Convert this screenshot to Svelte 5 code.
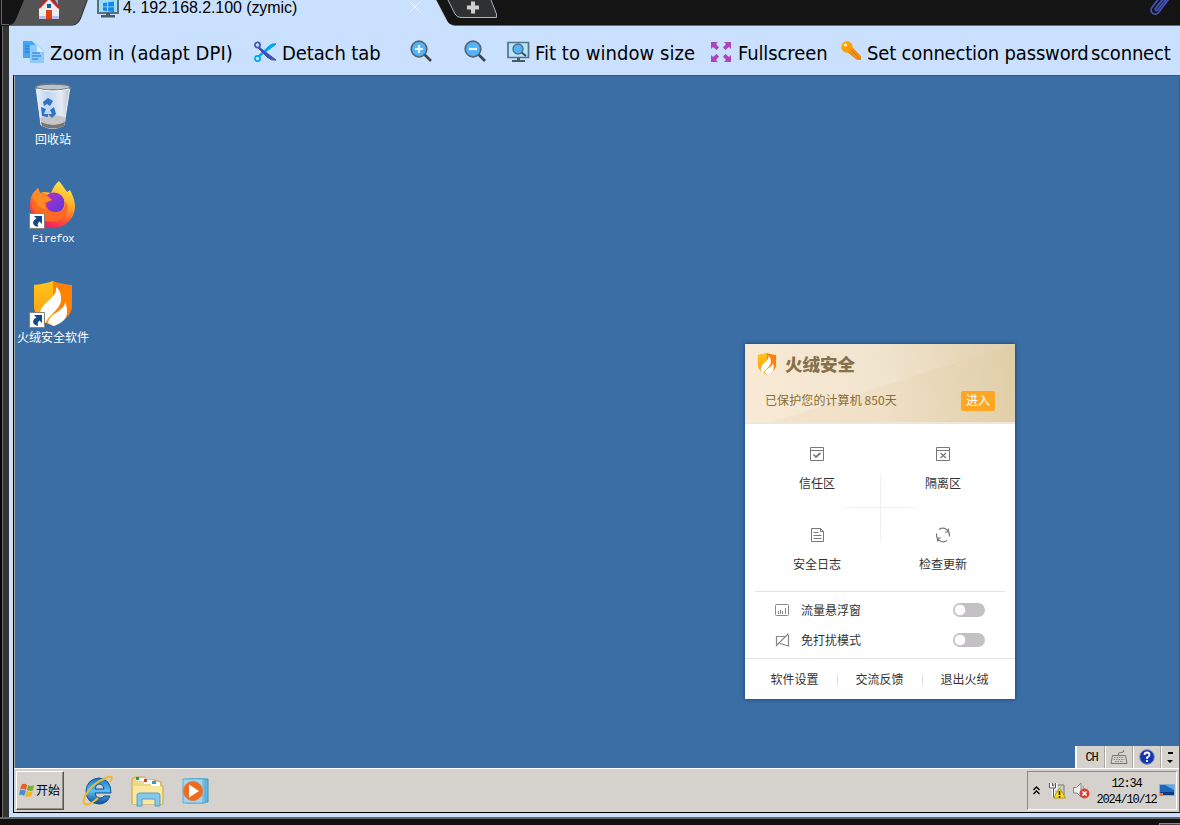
<script>
  const tiles = [
    { label: '信任区', icon: 'trust' },
    { label: '隔离区', icon: 'isolate' },
    { label: '安全日志', icon: 'log' },
    { label: '检查更新', icon: 'update' }
  ];
  const links = ['软件设置', '交流反馈', '退出火绒'];
</script>

{#snippet flame(w, h)}
  <svg width={w} height={h} viewBox="0 0 40 46">
    <defs>
      <linearGradient id="shieldL" x1="0" y1="0" x2="0" y2="1"><stop offset="0" stop-color="#ffc51c" /><stop offset="1" stop-color="#ff9a0c" /></linearGradient>
    </defs>
    <path d="M1 4Q12 3 20 0Q28 3 39 4V25Q39 37 20 45Q1 37 1 25Z" fill="#ff8206" />
    <path d="M1 4Q12 3 20 0V45Q1 37 1 25Z" fill="url(#shieldL)" />
    <path d="M23 6C25 17 7 22 7 33C7 38 10 40 13 42C14 34 29 29 28 17C28 12 26 8 23 6ZM32 20C33 30 17 31 15 42L21 45C29 42 34 38 34 31C34 26 33 23 32 20Z" fill="#fff" />
  </svg>
{/snippet}

{#snippet shortcut()}
  <svg class="shortcut" width="16" height="16" viewBox="0 0 16 16">
    <path d="M.5.5h15v15H.5z" fill="#fff" stroke="#85817a" />
    <path d="M5 3h8v8l-2.500-2.500Q8 10 9 14Q4 12.500 4 9.500Q4.500 6.500 7.500 5.500Z" fill="#164787" />
  </svg>
{/snippet}

{#snippet lens(plus)}
  <svg width="23" height="23" viewBox="0 0 23 23">
    <path d="M14 14l7 7" stroke="#37474f" stroke-width="2.6" />
    <circle cx="9" cy="9" r="7.8" fill="#55b3fa" stroke="#546572" stroke-width="1.7" />
    <path d={plus ? 'M5 9h8M9 5v8' : 'M5 9h8'} stroke="#e8f5ff" stroke-width="2.2" />
  </svg>
{/snippet}

<div class="app">
  <header class="tabs">
    <svg class="strip" width="1180" height="26" viewBox="0 0 1180 26">
      <path d="M0 0h1180v26H0z" fill="#141414" />
      <path d="M1.500 0v24.500H9" fill="none" stroke="#666" />
      <path d="M10 25Q14 24 16 19L24 0H87L80 19Q77 25 72 25Z" fill="#545454" />
      <path d="M9 25.500H75Q79 24 81 19L88 0H436L447 21Q449 25.500 455 25.500H1180" fill="#cae0ff" stroke="#666966" />
      <path d="M72 26Q78 25 81 19L88 0H436L447 21Q449 25 455 26Z" fill="#cae0ff" />
      <path d="M448 0L455 14Q457 17.500 461 17.500H496.500V14L491 0" fill="#303030" stroke="#a3b5c8" />
      <path d="M467 7.500h12M473 1.500v12" stroke="#d0d0d0" stroke-width="4" />
      <path d="M410 2l10 10M420 2l-10 10" stroke="#f4f8ff" stroke-width="1" />
      <path d="M39 8L49-2L59 8V19H39Z" fill="#ececec" /><path d="M39 16h7v3h-7zM52 16h7v3h-7z" fill="#b8bdec" />
      <path d="M55 0h3v5z" fill="#9fa8da" />
      <path d="M39 8L49-2.500L59 8" fill="none" stroke="#d71920" stroke-width="2" />
      <path d="M46 10h6v9h-6z" fill="#df4417" /><path d="M47 4h4v4h-4z" fill="#075fa8" />
      <path d="M98-2h20v15H98z" fill="#9edcf7" stroke="#53717f" stroke-width="2" />
      <path d="M103 3l4-.6v4h-4zM108 2.200l6-.8v5h-6zM103 7.300h4v4l-4-.7zM108 7.300h6v4.700l-6-.8z" fill="#1688e8" />
      <path d="M106 13h4v2h5v2.500h-14V15h5z" fill="#475e68" />
      <path d="M1160-3L1152 7.500a4 4 0 0 0 6.500 5L1171-4M1163-1L1155.500 8.500a1 1 0 0 0 2 1.500L1167-2" fill="none" stroke="#3f51b5" stroke-width="1.900" />
    </svg>
    <span class="tab-title">4. 192.168.2.100 (zymic)</span>
  </header>

  <div class="session">
    <aside class="edge"></aside>
    <main class="client">
      <nav class="toolbar">
        <div class="tool zoomin">
          <svg width="21" height="22" viewBox="0 0 21 22"><path d="M0 0h9l5 5v12H0z" fill="#42a5f5" /><path d="M2 5h4M2 8h4M2 11h4" stroke="#1976d2" /><path d="M7 4h8l6 6v12H7z" fill="#90caf9" /><path d="M14 4v7h7z" fill="#d9efff" /><path d="M9 12h8M9 15h9M9 18h6" stroke="#1976d2" /></svg>
          <span>Zoom in (adapt DPI)</span>
        </div>
        <div class="tool detach">
          <svg width="23" height="22" viewBox="0 0 23 22"><path d="M5 16L22 3Q18 2 14 6L4 15" fill="#00a8ef" stroke="#00a8ef" /><path d="M5 6L22 19Q17 20 13 16L4 7" fill="#3f51b5" stroke="#3f51b5" /><path d="M11 11L22 3Q18 2 14 6z" fill="#00a8ef" stroke="#00a8ef" /><circle cx="3.500" cy="4" r="2.600" fill="none" stroke="#4658b6" stroke-width="1.800" /><circle cx="3.500" cy="17.500" r="2.600" fill="none" stroke="#00a8ef" stroke-width="1.800" /></svg>
          <span>Detach tab</span>
        </div>
        <div class="tool plus">{@render lens(true)}</div>
        <div class="tool minus">{@render lens(false)}</div>
        <div class="tool fit">
          <svg width="23" height="22" viewBox="0 0 23 22"><path d="M1 1.500h20.500v15H1z" fill="#b7e4f8" stroke="#547487" stroke-width="1.700" /><path d="M10 17h3v2h5v2H5v-2h5z" fill="#455a64" /><path d="M14 11l5 4" stroke="#37474f" stroke-width="1.800" /><circle cx="11" cy="8" r="5" fill="#55b3fa" stroke="#527083" stroke-width="1.400" /></svg>
          <span>Fit to window size</span>
        </div>
        <div class="tool full">
          <svg width="20" height="20" viewBox="0 0 20 20" fill="#ad44bd"><path d="M0 0h7L5 2l3 3.500L5.500 8 2 5 0 7zM20 0v7l-2-2-3.500 3L12 5.500 15 2l-2-2zM0 20v-7l2 2 3.500-3L8 14.500 5 18l2 2zM20 20h-7l2-2-3-3.500 2.500-2.500 3.500 3 2-2z" /></svg>
          <span>Fullscreen</span>
        </div>
        <div class="tool key">
          <svg width="21" height="21" viewBox="0 0 21 21"><path d="M8 8l3-2 9 9v4h-4L6 11z" fill="#ef8d18" /><circle cx="6" cy="6" r="5.700" fill="#ffa000" /><path d="M9 8l10 10" stroke="#d87916" /><circle cx="4.500" cy="4" r="1.600" fill="#fff0cb" /></svg>
          <span>Set connection password</span>
        </div>
        <span class="disconnect">sconnect</span>
      </nav>

      <div class="remote">
        <section class="desktop">
          <div class="shortcut-item" style="top: 7px">
            <svg width="40" height="48" viewBox="0 0 40 48">
              <defs><linearGradient id="bin"><stop stop-color="#e8eff6" /><stop offset=".35" stop-color="#c0d6f2" /><stop offset=".75" stop-color="#e4eaf3" /><stop offset="1" stop-color="#b8c2cd" /></linearGradient></defs>
              <path d="M3 4L8 42Q20 49 31 42L37 4Z" fill="url(#bin)" stroke="#eef2f6" />
              <path d="M7 35Q20 29 33 35L31 43Q20 48 9 43Z" fill="#c5c5c5" /><path d="M8 39Q20 45 32 39L31 43Q20 48 9 43Z" fill="#777" />
              <ellipse cx="20" cy="4" rx="17" ry="3" fill="#b8c4d2" stroke="#6f767f" stroke-width="1.500" />
              <path d="M4 6Q20 10 36 6" fill="none" stroke="#fff" />
              <path d="M10 19l5-4 5 3-3 5-3-2-3 2zM8 24l5 2-2 5h4v3l-6-1zM17 27l4-3 2 7-4 4-4-4h4z" fill="#2f73c9" />
            </svg>
            <span>回收站</span>
          </div>
          <div class="shortcut-item" style="top: 105px">
            <svg width="48" height="48" viewBox="0 0 48 48">
              <defs>
                <linearGradient id="fx" x1=".8" y1="0" x2=".3" y2="1"><stop stop-color="#fff44f" /><stop offset=".35" stop-color="#ffb22c" /><stop offset=".68" stop-color="#ff5634" /><stop offset="1" stop-color="#ee116f" /></linearGradient>
                <linearGradient id="fp" x1="0" y1="0" x2="1" y2="1"><stop stop-color="#b530cc" /><stop offset="1" stop-color="#563ad8" /></linearGradient>
              </defs>
              <path d="M30 0Q34 5 38 11L41 9Q46 18 46 26A22 21 0 0 1 1 25Q1 17 4 12L9 7L11 12Q15 10 22 12Q25 4 30 0Z" fill="url(#fx)" />
              <circle cx="25" cy="22" r="10.500" fill="url(#fp)" />
              <path d="M11 12Q17 12 23 19L17 22Q17 31 27 31Q37 30 37 20Q42 35 28 40Q8 43 3 25Q5 17 11 12Z" fill="#ff6a22" />
              <path d="M9 7L11 12Q17 14 23 19L16 21Q15 26 18 29Q8 27 4 16Z" fill="#ff8b25" />
            </svg>
            {@render shortcut()}
            <span class="latin">Firefox</span>
          </div>
          <div class="shortcut-item shield" style="top: 205px">
            {@render flame(40, 46)}
            {@render shortcut()}
            <span>火绒安全软件</span>
          </div>

          <article class="popup">
            <div class="banner">
              <div class="brand">{@render flame(20, 22)}<strong>火绒安全</strong></div>
              <div class="status"><span>已保护您的计算机 850天</span><button>进入</button></div>
            </div>
            <div class="tiles">
              {#each tiles as t}
                <div class="tile">
                  <svg width="16" height="16" viewBox="0 0 16 16" fill="none" stroke="#777">
                    {#if t.icon === 'trust'}
                      <path d="M1.500 1.500h13v13h-13zM1.500 4.500h13" /><path d="M4.500 8.500l2.500 2.500L11.500 7" stroke-width="1.700" />
                    {:else if t.icon === 'isolate'}
                      <path d="M1.500 1.500h13v13h-13zM1.500 4.500h13" /><path d="M5.500 7l5.500 5M11 7l-5.500 5" stroke-width="1.300" />
                    {:else if t.icon === 'log'}
                      <path d="M2.500 1.500h9l3 3v10h-12zM11.500 1.500v3h3M4.500 5.500h5M4.500 8.500h8M4.500 11.500h8" />
                    {:else}
                      <path d="M4 2.500A6.600 6.600 0 0 1 14.200 9.500M12 13.500A6.600 6.600 0 0 1 1.800 6.500M13.500 1.500v3.500H10M2.500 14.500V11H6" stroke-width="1.200" />
                    {/if}
                  </svg>
                  <span>{t.label}</span>
                </div>
              {/each}
            </div>
            <div class="options">
              <div class="option">
                <svg width="16" height="16" viewBox="0 0 16 16" fill="none" stroke="#888"><rect x="1.500" y="2.500" width="13" height="11" rx="1" /><path d="M4.500 9v3M6.500 8v4M8.500 9v3M11.500 6v6" /></svg>
                <span>流量悬浮窗</span><i class="switch"></i>
              </div>
              <div class="option">
                <svg width="16" height="16" viewBox="0 0 16 16" fill="none" stroke="#888"><path d="M11 4.500H2.500v8M6 11.500l8.500 2.500V3M2 14L14.500 1.500" stroke-width="1.200" /></svg>
                <span>免打扰模式</span><i class="switch"></i>
              </div>
            </div>
            <footer class="links">{#each links as l}<span>{l}</span>{/each}</footer>
          </article>

          <div class="langbar">
            <span class="ch">CH</span>
            <span class="kb"><svg width="18" height="16" viewBox="0 0 18 16" fill="none" stroke="#777"><path d="M2.500 6.500h13l1.500 8H1zM8.500 6V4l5-1V1" /><path d="M4 8.500h10M3.500 10.500h11M5 12.500h8" stroke="#888" stroke-dasharray="1.500 1" /></svg></span>
            <span class="help"><svg width="16" height="16" viewBox="0 0 16 16"><circle cx="8" cy="8" r="7.300" fill="#1434b8" stroke="#7987a7" /><path d="M5.500 6Q5.500 3.500 8 3.500T10.500 6Q10.500 7.200 8 8.500V10M8 11v2" stroke="#fff" stroke-width="1.800" fill="none" /></svg></span>
            <span class="more"><svg width="7" height="13" viewBox="0 0 7 13"><path d="M1 1h5v2H1zM0 9h6l-3 3z" /></svg></span>
          </div>
        </section>

        <footer class="taskbar">
          <button class="start">
            <svg width="16" height="15" viewBox="0 0 16 15"><path d="M3 1Q6 0 8 2L7 7Q4 5 1 6Z" fill="#e65d28" /><path d="M9 2Q12 4 15 2L14 7Q11 9 8 7Z" fill="#79af34" /><path d="M1 7Q4 6 7 8L5 13Q3 11 0 12Z" fill="#438fd0" /><path d="M8 8Q11 10 14 8L12 13Q9 15 6 13Z" fill="#f3b719" /></svg>
            <span>开始</span>
          </button>
          <div class="pins">
            <svg width="32" height="32" viewBox="0 0 32 32">
              <defs><linearGradient id="ie" x1="0" y1="0" x2="0" y2="1"><stop stop-color="#1577c9" /><stop offset=".5" stop-color="#59c0ef" /><stop offset="1" stop-color="#0c4c9a" /></linearGradient></defs>
              <path fill-rule="evenodd" d="M17 3Q29 4 29 18H13Q14 23 18 23Q21 23 22 21H28Q25 29 17 29Q4 28 4 16Q5 4 17 3ZM13 14H22Q21 9 17 9Q14 9 13 14Z" fill="url(#ie)" stroke="#124f94" />
              <path d="M28 7Q33-1 24 3Q10 8 3 21Q-1 31 7 29Q12 27 16 23" fill="none" stroke="#efb72d" stroke-width="2" />
            </svg>
            <svg width="34" height="32" viewBox="0 0 34 32"><path d="M1 7V4l3-2h10v3h10l6 2v4h2v18H1z" fill="#efd783" stroke="#cfa849" /><path d="M5 3h9v3H5zM13 5h9v4h-9zM20 7h9v4h-9z" fill="#fff" /><path d="M5 2h3v3H5z" fill="#25a52c" /><path d="M13 4h3v3h-3z" fill="#dd3e20" /><path d="M21 6h4v3h-4z" fill="#289be0" /><path d="M2 11h29v18H2z" fill="#f9e9a0" /><path d="M6 31V20q0-2 3-2h17q3 0 3 2v11h-5v-7H11v7z" fill="#85c8e9" stroke="#559ec8" /></svg>
            <svg width="28" height="28" viewBox="0 0 28 28"><path d="M7 2h19v23H7z" fill="#64b5df" stroke="#3a94c4" /><path d="M4 2h19v24H4z" fill="#90cfee" stroke="#4ca3ce" /><path d="M1 2h20v24H1z" fill="#a1d5ee" stroke="#64abcf" /><circle cx="11" cy="14" r="9.500" fill="#f26b1d" stroke="#d97a43" /><path d="M7 7.500l10 6.500-10 6.500z" fill="#fff" /></svg>
          </div>
          <div class="tray">
            <svg class="chev" width="7" height="9" viewBox="0 0 7 9"><path d="M.5 4L3.500 1L6.500 4M.5 8L3.500 5L6.500 8" fill="none" stroke="#000" stroke-width="1.300" /></svg>
            <svg class="net" width="17" height="17" viewBox="0 0 17 17"><path d="M4 3h11v10H4z" fill="#ccc" stroke="#777" /><path d="M2 1v5h5V1M4.500 6v9" fill="none" stroke="#fff" stroke-width="3" /><path d="M.5 1v5h6V1M3.500 1v3M4.500 6v9" fill="none" stroke="#555" /><path d="M10.500 6l6 10h-12z" fill="#ffdf21" stroke="#b7960b" /><path d="M10.500 9v4M10.500 14v1.500" stroke="#111" stroke-width="1.500" /></svg>
            <svg class="vol" width="17" height="17" viewBox="0 0 17 17"><path d="M.5 5.500h3L8 1v14l-4-4H.5z" fill="#eee" stroke="#888" /><path d="M10 4q2 3 0 7" fill="none" stroke="#999" /><circle cx="11.500" cy="11.500" r="5" fill="#dc4033" /><path d="M9.500 9.500l4 4M13.500 9.500l-4 4" stroke="#fff" stroke-width="1.700" /></svg>
            <div class="clock"><span>12:34</span><span>2024/10/12</span></div>
            <svg class="show" width="16" height="13" viewBox="0 0 16 13"><path d="M.5.5h15v11H.5z" fill="#1b68bd" stroke="#8db1d6" /><path d="M6 1h9v5z" fill="#62a9e8" /><path d="M1 8h14v3H1z" fill="#123d78" /><path d="M1 9h3v3H1z" fill="#f37235" /></svg>
          </div>
        </footer>
      </div>
    </main>
  </div>
  <div class="bottom"><i></i></div>
</div>

<style>
  :global(body) { margin: 0; overflow: hidden; }
  .app { width: 1180px; height: 825px; display: flex; flex-direction: column; background: #141414; overflow: hidden; font-family: "Noto Sans CJK SC", sans-serif; font-size: 12px; }
  svg { display: block; flex: none; }
  button { font: inherit; padding: 0; }
  .tabs { height: 26px; position: relative; flex: none; }
  .strip { position: absolute; inset: 0; }
  .tab-title { position: absolute; left: 123px; top: 0; font: 16px/16px "Liberation Sans", sans-serif; letter-spacing: -.08px; white-space: nowrap; }
  .session { height: 791px; display: flex; flex: none; }
  .edge { width: 9px; box-sizing: border-box; border-left: 2px solid #050505; background: linear-gradient(90deg, #6a6a6a 1px, #333 1px); flex: none; }
  .client { width: 1171px; background: #cae0ff; display: flex; flex-direction: column; }
  .toolbar { height: 49px; box-sizing: border-box; padding-top: 2px; display: flex; align-items: center; font: 20px/26px "DejaVu Sans Condensed", "DejaVu Sans", sans-serif; font-stretch: condensed; white-space: nowrap; flex: none; color: #000; }
  .tool { display: flex; align-items: center; box-sizing: border-box; flex: none; }
  .tool span, .disconnect { padding-top: 2px; }
  .zoomin { width: 230px; padding-left: 14px; gap: 6px; letter-spacing: .08px; }
  .detach { width: 162px; padding-left: 15px; gap: 5px; letter-spacing: -.1px; }
  .plus { width: 54px; padding-left: 9px; }
  .minus { width: 43px; padding-left: 9px; }
  .fit { width: 204px; padding-left: 9px; gap: 5px; letter-spacing: .05px; }
  .full { width: 130px; padding-left: 9px; gap: 7px; letter-spacing: -.1px; }
  .key { width: 259px; padding-left: 9px; gap: 5px; letter-spacing: -.17px; }
  .disconnect { flex: none; letter-spacing: -.2px; }
  .remote { margin-left: 4px; width: 1167px; height: 738px; box-sizing: border-box; border: 1px solid #000; border-right-color: #555; border-top: 0; display: flex; flex-direction: column; }
  .desktop { height: 693px; position: relative; background: #3a6ea5; border-left: 1px solid #aaa69e; border-top: 1px solid #2f5b8a; box-sizing: border-box; flex: none; }
  .shortcut-item { position: absolute; left: 0; width: 76px; display: flex; flex-direction: column; align-items: center; color: #fff; }
  .shortcut-item > span { line-height: 16px; white-space: nowrap; }
  .shortcut-item .latin { font: 11px/14px "Liberation Mono", monospace; letter-spacing: -.6px; margin-top: 3px; }
  .shield > span { margin-top: 2px; }
  .shortcut { position: absolute; left: 14px; top: 32px; }
  .shield :global(.shortcut) { top: 31px; }
  .popup { position: absolute; left: 730px; top: 268px; width: 270px; height: 355px; background: #fff; box-shadow: 0 0 4px #173d69; color: #333; }
  .banner { height: 80px; box-sizing: border-box; padding: 9px 20px 0 12px; background: linear-gradient(162deg, transparent 52%, #dcc08d24 53%, #d6b7751c), linear-gradient(80deg, #f8ead5, #f2e5d0 48%, #e1d0ac); border-bottom: 2px solid #eee6d8; }
  .brand { display: flex; align-items: center; gap: 8px; height: 22px; color: #86714b; }
  .brand strong { font-size: 17.5px; line-height: 22px; font-weight: 900; }
  .status { display: flex; justify-content: space-between; align-items: center; height: 20px; margin: 16px 0 0 8px; color: #8a6d34; }
  .status span { margin-top: -3px; letter-spacing: .1px; }
  .status button { width: 34px; height: 20px; border: 0; border-radius: 2px; background: #ffa722; color: #fff; line-height: 18px; padding-bottom: 2px; }
  .tiles { height: 167px; box-sizing: border-box; padding: 22px 9px 0; display: grid; grid-template-columns: 126px 126px; grid-template-rows: 81px 81px; background: linear-gradient(transparent, #f3ecec 20%, #f3ecec 80%, transparent) 135px 45px / 1px 78px no-repeat, linear-gradient(90deg, transparent, #f3ecec 20%, #f3ecec 80%, transparent) 93px 83px / 84px 1px no-repeat; }
  .tile { display: flex; flex-direction: column; align-items: center; gap: 12px; }
  .tile span { line-height: 17px; }
  .options { height: 67px; margin: 0 10px; padding-top: 3px; border-top: 1px solid #e5e3e3; box-sizing: border-box; }
  .option { height: 30px; display: flex; align-items: center; padding: 0 20px 0 19px; }
  .option span { margin: -2px 0 0 11px; flex: 1; }
  .switch { width: 32px; height: 14px; border-radius: 7px; background: radial-gradient(circle at 7px 7px, #fff 5px, #c4c1c5 5.600px); }
  .links { height: 41px; border-top: 1px solid #e5e3e3; box-sizing: border-box; display: grid; grid-template-columns: repeat(3, 85px); padding: 0 0 2px 7px; align-items: center; text-align: center; }
  .links span + span { background: linear-gradient(#ddd, #ddd) left 5px / 1px 10px no-repeat; }
  .langbar { position: absolute; right: 0; bottom: 0; width: 104px; height: 22px; background: #d5d1cc; display: grid; grid-template-columns: 29px 28px 28px 18px; box-sizing: border-box; border-left: 1px solid #fff; }
  .langbar > span { display: flex; align-items: center; justify-content: center; border-left: 1px solid #fff; border-right: 1px solid #aaa79f; box-sizing: border-box; }
  .langbar .more { border-right: 0; }
  .ch, .clock { font-family: "Liberation Mono", monospace; font-size: 12px; letter-spacing: -1.200px; }
  .langbar .ch { padding: 2px 0 0 2px; }
  .taskbar { height: 44px; box-sizing: border-box; border-top: 1px solid #fff; background: #d5d1cc; display: flex; padding: 2px 2px 2px 2px; flex: none; }
  .start { width: 48px; height: 39px; box-sizing: border-box; border: 1px solid; border-color: #fff #555 #555 #fff; box-shadow: inset -1px -1px #928f89; background: #d5d1cc; display: flex; align-items: center; gap: 1px; padding-left: 2px; color: #000; }
  .start span { margin-top: -2px; }
  .pins { display: flex; gap: 17px; align-items: center; margin-left: 18px; flex: 1; }
  .tray { width: 150px; height: 39px; box-sizing: border-box; border: 1px solid; border-color: #8b8781 #fff #fff #8b8781; display: flex; align-items: center; }
  .chev { margin-left: 5px; }
  .net { margin-left: 9px; }
  .vol { margin-left: 7px; }
  .clock { width: 61px; margin: 2px 0 0 6px; display: flex; flex-direction: column; align-items: center; line-height: 16px; }
  .show { margin-left: 2px; }
  .bottom { height: 8px; display: flex; justify-content: flex-end; align-items: flex-end; background: linear-gradient(#666 2px, #111 2px); }
  .bottom i { width: 21px; height: 2px; background: #444; border: solid #888; border-width: 1px 0 0 1px; box-sizing: border-box; }
</style>
